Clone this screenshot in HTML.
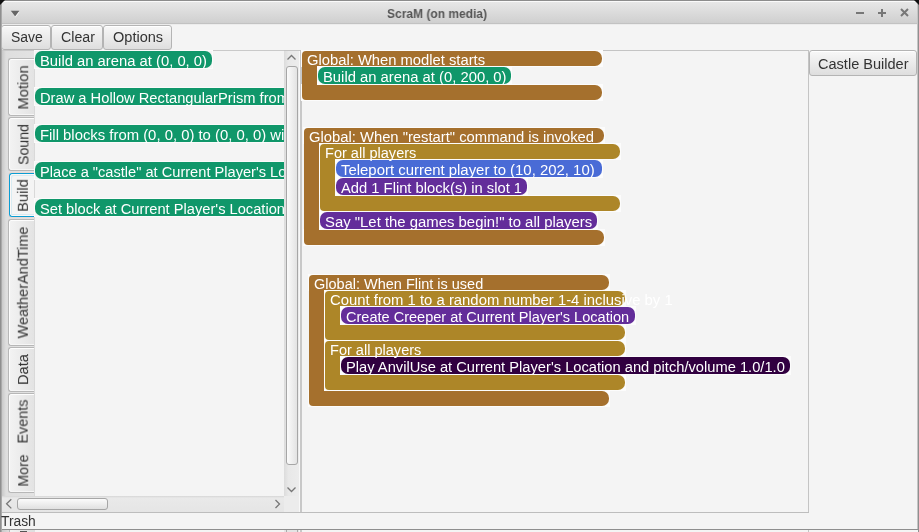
<!DOCTYPE html>
<html><head><meta charset="utf-8"><style>
html,body{margin:0;padding:0;}
body{width:919px;height:532px;position:relative;overflow:hidden;background:#f4f4f4;font-family:"Liberation Sans",sans-serif;font-size:13px;}
body div,body svg{position:absolute;}
.t{white-space:nowrap;line-height:15px;transform-origin:0 0;will-change:transform;}
.btn{border:1px solid #b4b4b4;border-radius:3px;background:linear-gradient(#f8f8f8,#dedede);box-shadow:inset 0 1px 0 #fff;}
</style></head><body>
<div style="left:0px;top:0px;width:919px;height:25px;background:linear-gradient(#e9e9e9,#cdcdcd);"></div>
<div style="left:0px;top:0px;width:919px;height:1px;background:#8c8c8c;"></div>
<div style="left:1px;top:1px;width:917px;height:1px;background:#fafafa;"></div>
<div style="left:0px;top:23px;width:919px;height:1px;background:#c2c2c2;"></div>
<div style="left:0px;top:24px;width:919px;height:1px;background:#ececec;"></div>
<div style="left:0px;top:0px;width:1px;height:532px;background:#8f8f8f;"></div>
<div style="left:1px;top:1px;width:1px;height:531px;background:#a9a9a9;"></div>
<div style="left:918px;top:0px;width:1px;height:532px;background:#8f8f8f;"></div>
<div style="left:917px;top:1px;width:1px;height:531px;background:#c4c4c4;"></div>
<svg style="left:0;top:0" width="6" height="6"><path d="M0 0H5L0 5Z" fill="#111"/></svg>
<svg style="left:913px;top:0" width="6" height="6"><path d="M1 0H6V5Z" fill="#111"/></svg>
<svg style="left:10px;top:10px" width="12" height="10"><path d="M1.5 2H9.5L5.5 7.5Z" fill="#fff" opacity=".8"/><path d="M0.8 0.8H9.4L5.1 6.6Z" fill="#666"/></svg>
<div class="t" style="left:387px;top:6.00px;color:#565656;font-size:13px;font-weight:bold;transform:scaleX(0.9229);">ScraM (on media)</div>
<svg style="left:850px;top:5px" width="64" height="16"><rect x="6" y="7" width="8" height="2" fill="#777"/><rect x="28" y="7" width="8" height="2" fill="#777"/><rect x="31" y="4" width="2" height="8" fill="#777"/><path d="M51 4L58 11M58 4L51 11" stroke="#777" stroke-width="2"/></svg>
<div class="btn" style="left:1px;top:25px;width:48px;height:23px;"></div>
<div class="t" style="left:10.5px;top:30.00px;color:#333;font-size:13.8px;transform:scaleX(1.0140);">Save</div>
<div class="btn" style="left:51px;top:25px;width:50px;height:23px;"></div>
<div class="t" style="left:60.5px;top:30.00px;color:#333;font-size:13.8px;transform:scaleX(1.0306);">Clear</div>
<div class="btn" style="left:103px;top:25px;width:67px;height:23px;"></div>
<div class="t" style="left:112.5px;top:30.00px;color:#333;font-size:13.8px;transform:scaleX(1.0540);">Options</div>
<div style="left:2px;top:50px;width:282px;height:1px;background:#c9c9c9;"></div>
<div style="left:2px;top:51px;width:33px;height:445px;background:linear-gradient(to right,#c9c9c9 0px,#dedede 4px,#e3e3e3 100%);"></div>
<div style="left:8px;top:58px;width:26px;height:58px;background:linear-gradient(to right,#f3f3f3,#e3e3e3);border:1px solid #b7b7b7;border-top:1px solid #b7b7b7;border-bottom:1px solid #b7b7b7;border-right:none;border-radius:3px 0 0 3px;box-sizing:border-box;box-shadow:inset 1px 0 0 #fdfdfd, inset 0 1px 0 #fdfdfd, inset 0 -1px 0 #f6f6f6;"></div>
<div class="t" style="left:2.78px;top:79.50px;width:41.43px;color:#333;font-size:13.8px;transform:rotate(-90deg) scaleX(1.0635);transform-origin:center;">Motion</div>
<div style="left:8px;top:117px;width:26px;height:54px;background:linear-gradient(to right,#f3f3f3,#e3e3e3);border:1px solid #b7b7b7;border-top:1px solid #b7b7b7;border-bottom:1px solid #b7b7b7;border-right:none;border-radius:3px 0 0 3px;box-sizing:border-box;box-shadow:inset 1px 0 0 #fdfdfd, inset 0 1px 0 #fdfdfd, inset 0 -1px 0 #f6f6f6;"></div>
<div class="t" style="left:3.54px;top:136.50px;width:39.92px;color:#333;font-size:13.8px;transform:rotate(-90deg) scaleX(1.0250);transform-origin:center;">Sound</div>
<div style="left:8px;top:172px;width:27px;height:46px;background:#f4f4f4;border:1px solid #e6d9d6;border-right:none;border-radius:3px 0 0 3px;box-sizing:border-box;"></div>
<div style="left:9px;top:173px;width:26px;height:44px;border:1px solid #0a9dd3;border-right:none;border-radius:3px 0 0 3px;box-sizing:border-box;box-shadow:inset 1px 1px 0 #fdf8f6, inset 0 -1px 0 #fdf8f6, inset 2px 2px 0 #d8ebf2, inset 0 -2px 0 #d8ebf2;"></div>
<div class="t" style="left:8.15px;top:187.50px;width:30.70px;color:#333;font-size:13.8px;transform:rotate(-90deg) scaleX(1.0626);transform-origin:center;">Build</div>
<div style="left:8px;top:219px;width:26px;height:127px;background:linear-gradient(to right,#f3f3f3,#e3e3e3);border:1px solid #b7b7b7;border-top:1px solid #b7b7b7;border-bottom:1px solid #b7b7b7;border-right:none;border-radius:3px 0 0 3px;box-sizing:border-box;box-shadow:inset 1px 0 0 #fdfdfd, inset 0 1px 0 #fdfdfd, inset 0 -1px 0 #f6f6f6;"></div>
<div class="t" style="left:-29.82px;top:275.00px;width:106.63px;color:#333;font-size:13.8px;transform:rotate(-90deg) scaleX(1.0494);transform-origin:center;">WeatherAndTime</div>
<div style="left:8px;top:347px;width:26px;height:45px;background:linear-gradient(to right,#f3f3f3,#e3e3e3);border:1px solid #b7b7b7;border-top:1px solid #b7b7b7;border-bottom:1px solid #b7b7b7;border-right:none;border-radius:3px 0 0 3px;box-sizing:border-box;box-shadow:inset 1px 0 0 #fdfdfd, inset 0 1px 0 #fdfdfd, inset 0 -1px 0 #f6f6f6;"></div>
<div class="t" style="left:8.92px;top:362.00px;width:29.16px;color:#333;font-size:13.8px;transform:rotate(-90deg) scaleX(1.0647);transform-origin:center;">Data</div>
<div style="left:8px;top:393px;width:26px;height:56px;background:linear-gradient(to right,#f3f3f3,#e3e3e3);border:1px solid #b7b7b7;border-top:1px solid #b7b7b7;border-bottom:none;border-right:none;border-radius:3px 0 0 0;box-sizing:border-box;box-shadow:inset 1px 0 0 #fdfdfd, inset 0 1px 0 #fdfdfd, inset 0 0 0 #f6f6f6;"></div>
<div class="t" style="left:2.40px;top:413.50px;width:42.20px;color:#333;font-size:13.8px;transform:rotate(-90deg) scaleX(1.0427);transform-origin:center;">Events</div>
<div style="left:8px;top:448px;width:26px;height:45px;background:linear-gradient(to right,#f3f3f3,#e3e3e3);border:1px solid #b7b7b7;border-top:none;border-bottom:1px solid #b7b7b7;border-right:none;border-radius:0 0 0 3px;box-sizing:border-box;box-shadow:inset 1px 0 0 #fdfdfd, inset 0 0 0 #fdfdfd, inset 0 -1px 0 #f6f6f6;"></div>
<div class="t" style="left:7.78px;top:463.00px;width:31.45px;color:#333;font-size:13.8px;transform:rotate(-90deg) scaleX(1.0250);transform-origin:center;">More</div>
<div style="left:34px;top:51px;width:1px;height:445px;background:#d9d9d9;"></div>
<div style="left:34px;top:50px;width:250px;height:446px;overflow:hidden;">
<div style="left:1px;top:1px;width:249px;height:445px;">
<div style="left:-1px;top:-1px;width:177px;height:17px;border:1px solid #fbfbfb;"></div>
<div style="left:0;top:0px;width:177px;height:17px;background:#10976a;border-radius:7px;"></div>
<div class="t" style="left:5px;top:3.00px;color:#fff;font-size:13.8px;transform:scaleX(1.0726);">Build an arena at (0, 0, 0)</div>
<div style="left:-1px;top:36px;width:385px;height:17px;border:1px solid #fbfbfb;"></div>
<div style="left:0;top:37px;width:385px;height:17px;background:#10976a;border-radius:7px;"></div>
<div class="t" style="left:5px;top:40.00px;color:#fff;font-size:13.8px;transform:scaleX(1.0646);">Draw a Hollow RectangularPrism from (0, 0, 0) to (0, 0, 0)</div>
<div style="left:-1px;top:73px;width:307px;height:17px;border:1px solid #fbfbfb;"></div>
<div style="left:0;top:74px;width:307px;height:17px;background:#10976a;border-radius:7px;"></div>
<div class="t" style="left:5px;top:77.00px;color:#fff;font-size:13.8px;transform:scaleX(1.0767);">Fill blocks from (0, 0, 0) to (0, 0, 0) with stone</div>
<div style="left:-1px;top:110px;width:295px;height:17px;border:1px solid #fbfbfb;"></div>
<div style="left:0;top:111px;width:295px;height:17px;background:#10976a;border-radius:7px;"></div>
<div class="t" style="left:5px;top:114.00px;color:#fff;font-size:13.8px;transform:scaleX(1.0595);">Place a &quot;castle&quot; at Current Player&#x27;s Location</div>
<div style="left:-1px;top:147px;width:311px;height:17px;border:1px solid #fbfbfb;"></div>
<div style="left:0;top:148px;width:311px;height:17px;background:#10976a;border-radius:7px;"></div>
<div class="t" style="left:5px;top:151.00px;color:#fff;font-size:13.8px;transform:scaleX(1.0635);">Set block at Current Player&#x27;s Location to stone</div>
</div></div>
<div style="left:284px;top:51px;width:15px;height:445px;background:linear-gradient(to right,#dcdcdc,#e8e8e8 30%,#ececec);"></div>
<svg style="left:284px;top:51px" width="15" height="12"><path d="M3.5 8.5L7.5 4.5L11.5 8.5" stroke="#777" stroke-width="1.3" fill="none"/></svg>
<div style="left:286px;top:66px;width:12px;height:399px;background:linear-gradient(to right,#fbfbfb,#e3e3e3);border:1px solid #a6a6a6;border-radius:3px;box-sizing:border-box;"></div>
<svg style="left:284px;top:484px" width="15" height="12"><path d="M3.5 3.5L7.5 7.5L11.5 3.5" stroke="#777" stroke-width="1.3" fill="none"/></svg>
<div style="left:2px;top:496px;width:282px;height:16px;background:linear-gradient(#d6d6d6 0px,#e9e9e9 2px,#e5e5e5);"></div>
<svg style="left:2px;top:496px" width="14" height="16"><path d="M9.3 3.2L4.6 7.8L9.3 12.4" stroke="#777" stroke-width="1.3" fill="none"/></svg>
<div style="left:17px;top:498px;width:91px;height:12px;background:linear-gradient(#fbfbfb,#e0e0e0);border:1px solid #a6a6a6;border-radius:3px;box-sizing:border-box;"></div>
<svg style="left:270px;top:496px" width="14" height="16"><path d="M5.5 4L9.5 8L5.5 12" stroke="#777" stroke-width="1.3" fill="none"/></svg>
<div style="left:284px;top:496px;width:15px;height:16px;background:#ececec;"></div>
<div style="left:299px;top:51px;width:1px;height:461px;background:#f8f8f8;"></div>
<div style="left:300px;top:51px;width:2px;height:461px;background:#c8c8c8;"></div>
<div style="left:284px;top:50px;width:525px;height:1px;background:#c4c4c4;"></div>
<div style="left:808px;top:50px;width:1px;height:462px;background:#c4c4c4;"></div>
<div style="left:301px;top:50px;width:300px;height:15px;border:1px solid #fcfcfc;background:#fcfcfc;"></div>
<div style="left:301px;top:84px;width:300px;height:15px;border:1px solid #fcfcfc;background:#fcfcfc;"></div>
<div style="left:302px;top:51px;width:300px;height:15px;background:#a5702d;border-radius:4px 7px 7px 0;"></div>
<div style="left:302px;top:58px;width:15px;height:34px;background:#a5702d;"></div>
<div style="left:302px;top:85px;width:300px;height:15px;background:#a5702d;border-radius:0 7px 7px 4px;"></div>
<div style="left:317px;top:66px;width:20px;height:19px;background:#fff;"></div>
<div style="left:317px;top:66px;width:193px;height:17px;border:1px solid #fcfcfc;background:#fcfcfc;"></div>
<div style="left:318px;top:67px;width:193px;height:17px;background:#10976a;border-radius:7px;"></div>
<div class="t" style="left:323px;top:70.00px;color:#fff;font-size:13.8px;transform:scaleX(1.0730);">Build an arena at (0, 200, 0)</div>
<div class="t" style="left:307px;top:53.00px;color:#fff;font-size:13.8px;transform:scaleX(1.0702);">Global: When modlet starts</div>
<div style="left:303px;top:127px;width:300px;height:15px;border:1px solid #fcfcfc;background:#fcfcfc;"></div>
<div style="left:303px;top:229px;width:300px;height:15px;border:1px solid #fcfcfc;background:#fcfcfc;"></div>
<div style="left:304px;top:128px;width:300px;height:15px;background:#a5702d;border-radius:4px 7px 7px 0;"></div>
<div style="left:304px;top:135px;width:15px;height:102px;background:#a5702d;"></div>
<div style="left:304px;top:230px;width:300px;height:15px;background:#a5702d;border-radius:0 7px 7px 4px;"></div>
<div style="left:319px;top:143px;width:20px;height:87px;background:#fff;"></div>
<div style="left:319px;top:143px;width:300px;height:15px;border:1px solid #fcfcfc;background:#fcfcfc;"></div>
<div style="left:319px;top:195px;width:300px;height:15px;border:1px solid #fcfcfc;background:#fcfcfc;"></div>
<div style="left:320px;top:144px;width:300px;height:15px;background:#ad8628;border-radius:4px 7px 7px 0;"></div>
<div style="left:320px;top:151px;width:15px;height:52px;background:#ad8628;"></div>
<div style="left:320px;top:196px;width:300px;height:15px;background:#ad8628;border-radius:0 7px 7px 4px;"></div>
<div style="left:335px;top:159px;width:20px;height:37px;background:#fff;"></div>
<div style="left:335px;top:159px;width:266px;height:17px;border:1px solid #fcfcfc;background:#fcfcfc;"></div>
<div style="left:336px;top:160px;width:266px;height:17px;background:#496bd6;border-radius:7px;"></div>
<div class="t" style="left:341px;top:163.00px;color:#fff;font-size:13.8px;transform:scaleX(1.0809);">Teleport current player to (10, 202, 10)</div>
<div style="left:335px;top:177px;width:191px;height:17px;border:1px solid #fcfcfc;background:#fcfcfc;"></div>
<div style="left:336px;top:178px;width:191px;height:17px;background:#632d9a;border-radius:7px;"></div>
<div class="t" style="left:341px;top:181.00px;color:#fff;font-size:13.8px;transform:scaleX(1.0685);">Add 1 Flint block(s) in slot 1</div>
<div style="left:319px;top:211px;width:277px;height:17px;border:1px solid #fcfcfc;background:#fcfcfc;"></div>
<div style="left:320px;top:212px;width:277px;height:17px;background:#632d9a;border-radius:7px;"></div>
<div class="t" style="left:325px;top:215.00px;color:#fff;font-size:13.8px;transform:scaleX(1.0791);">Say &quot;Let the games begin!&quot; to all players</div>
<div class="t" style="left:309px;top:130.00px;color:#fff;font-size:13.8px;transform:scaleX(1.0718);">Global: When &quot;restart&quot; command is invoked</div>
<div class="t" style="left:325px;top:146.00px;color:#fff;font-size:13.8px;transform:scaleX(1.0541);">For all players</div>
<div style="left:308px;top:274px;width:300px;height:15px;border:1px solid #fcfcfc;background:#fcfcfc;"></div>
<div style="left:308px;top:390px;width:300px;height:15px;border:1px solid #fcfcfc;background:#fcfcfc;"></div>
<div style="left:309px;top:275px;width:300px;height:15px;background:#a5702d;border-radius:4px 7px 7px 0;"></div>
<div style="left:309px;top:282px;width:15px;height:116px;background:#a5702d;"></div>
<div style="left:309px;top:391px;width:300px;height:15px;background:#a5702d;border-radius:0 7px 7px 4px;"></div>
<div style="left:324px;top:290px;width:20px;height:101px;background:#fff;"></div>
<div style="left:324px;top:290px;width:300px;height:15px;border:1px solid #fcfcfc;background:#fcfcfc;"></div>
<div style="left:324px;top:324px;width:300px;height:15px;border:1px solid #fcfcfc;background:#fcfcfc;"></div>
<div style="left:325px;top:291px;width:300px;height:15px;background:#ad8628;border-radius:4px 7px 7px 0;"></div>
<div style="left:325px;top:298px;width:15px;height:34px;background:#ad8628;"></div>
<div style="left:325px;top:325px;width:300px;height:15px;background:#ad8628;border-radius:0 7px 7px 4px;"></div>
<div style="left:340px;top:306px;width:20px;height:19px;background:#fff;"></div>
<div style="left:340px;top:306px;width:294px;height:17px;border:1px solid #fcfcfc;background:#fcfcfc;"></div>
<div style="left:341px;top:307px;width:294px;height:17px;background:#632d9a;border-radius:7px;"></div>
<div class="t" style="left:346px;top:310.00px;color:#fff;font-size:13.8px;transform:scaleX(1.0533);">Create Creeper at Current Player&#x27;s Location</div>
<div style="left:324px;top:340px;width:300px;height:15px;border:1px solid #fcfcfc;background:#fcfcfc;"></div>
<div style="left:324px;top:374px;width:300px;height:15px;border:1px solid #fcfcfc;background:#fcfcfc;"></div>
<div style="left:325px;top:341px;width:300px;height:15px;background:#ad8628;border-radius:4px 7px 7px 0;"></div>
<div style="left:325px;top:348px;width:15px;height:34px;background:#ad8628;"></div>
<div style="left:325px;top:375px;width:300px;height:15px;background:#ad8628;border-radius:0 7px 7px 4px;"></div>
<div style="left:340px;top:356px;width:20px;height:19px;background:#fff;"></div>
<div style="left:340px;top:356px;width:449px;height:17px;border:1px solid #fcfcfc;background:#fcfcfc;"></div>
<div style="left:341px;top:357px;width:449px;height:17px;background:#310040;border-radius:7px;"></div>
<div class="t" style="left:346px;top:360.00px;color:#fff;font-size:13.8px;transform:scaleX(1.0647);">Play AnvilUse at Current Player&#x27;s Location and pitch/volume 1.0/1.0</div>
<div class="t" style="left:314px;top:277.00px;color:#fff;font-size:13.8px;transform:scaleX(1.0510);">Global: When Flint is used</div>
<div class="t" style="left:330px;top:293.00px;color:#fff;font-size:13.8px;transform:scaleX(1.0767);">Count from 1 to a random number 1-4 inclusive by 1</div>
<div class="t" style="left:330px;top:343.00px;color:#fff;font-size:13.8px;transform:scaleX(1.0541);">For all players</div>
<div class="btn" style="left:809px;top:50px;width:106px;height:24px;"></div>
<div class="t" style="left:817.5px;top:57.00px;color:#333;font-size:13.8px;transform:scaleX(1.0544);">Castle Builder</div>
<div style="left:2px;top:512px;width:807px;height:1px;background:#bdbdbd;"></div>
<div class="t" style="left:0.8px;top:514.00px;color:#333;font-size:13.8px;transform:scaleX(0.9879);">Trash</div>
<div style="left:2px;top:529px;width:916px;height:1px;background:#8e8e8e;"></div>
<div style="left:2px;top:530px;width:916px;height:2px;background:#f4f4f4;"></div>
<div style="left:2px;top:530px;width:7px;height:2px;background:linear-gradient(to right,#c9c9c9,#dedede);"></div>
<div style="left:9px;top:530px;width:26px;height:2px;background:linear-gradient(to right,#f2f2f2,#dddddd);border-left:1px solid #b9b9b9;box-sizing:border-box;"></div>
<div style="left:20px;top:531px;width:7px;height:1px;background:#555;"></div>
<div style="left:284px;top:530px;width:15px;height:2px;background:#e4e4e4;"></div>
<div style="left:286px;top:530px;width:1px;height:2px;background:#aaa;"></div>
<div style="left:297px;top:530px;width:1px;height:2px;background:#aaa;"></div>
<div style="left:300px;top:530px;width:2px;height:2px;background:#c8c8c8;"></div>
<div style="left:808px;top:530px;width:1px;height:2px;background:#c4c4c4;"></div>
</body></html>
